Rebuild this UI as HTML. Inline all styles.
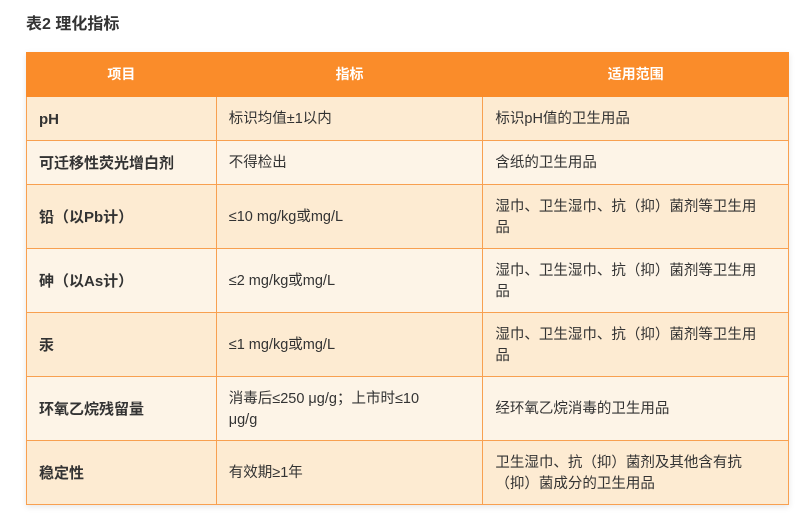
<!DOCTYPE html>
<html><head><meta charset="utf-8"><style>
body{margin:0;background:#fff;font-family:"Liberation Sans","Noto Sans CJK SC",sans-serif;width:800px;height:523px;overflow:hidden;position:relative}
h1{position:absolute;left:26px;top:10px;margin:0;font-size:16px;font-weight:bold;color:#333}
table{position:absolute;left:26px;top:52px;width:763px;border-collapse:collapse;box-shadow:0 2px 6px rgba(0,0,0,.1)}
td,th{border:1px solid #f8a050;font-size:14.5px;color:#333;padding:2px 12px 0;line-height:21px;text-align:left}
th{background:#fa8c2a;color:#fff;height:43px;text-align:center;font-weight:bold;border-color:#fa8c2a;font-size:14px;padding:0}
td:first-child{font-weight:bold;font-size:15px}
tr.a td{background:#fdebd2}
tr.b td{background:#fdf4e7}
</style></head><body>
<h1>表2 理化指标</h1>
<table>
<colgroup><col style="width:190px"><col style="width:267px"><col style="width:306px"></colgroup>
<tr><th>项目</th><th>指标</th><th>适用范围</th></tr>
<tr class="a" style="height:44px"><td>pH</td><td>标识均值±1以内</td><td>标识pH值的卫生用品</td></tr>
<tr class="b" style="height:44px"><td>可迁移性荧光增白剂</td><td>不得检出</td><td>含纸的卫生用品</td></tr>
<tr class="a" style="height:64px"><td>铅（以Pb计）</td><td>≤10 mg/kg或mg/L</td><td>湿巾、卫生湿巾、抗（抑）菌剂等卫生用<br>品</td></tr>
<tr class="b" style="height:64px"><td>砷（以As计）</td><td>≤2 mg/kg或mg/L</td><td>湿巾、卫生湿巾、抗（抑）菌剂等卫生用<br>品</td></tr>
<tr class="a" style="height:64px"><td>汞</td><td>≤1 mg/kg或mg/L</td><td>湿巾、卫生湿巾、抗（抑）菌剂等卫生用<br>品</td></tr>
<tr class="b" style="height:64px"><td>环氧乙烷残留量</td><td>消毒后≤250 μg/g；上市时≤10<br>μg/g</td><td>经环氧乙烷消毒的卫生用品</td></tr>
<tr class="a" style="height:64px"><td>稳定性</td><td>有效期≥1年</td><td>卫生湿巾、抗（抑）菌剂及其他含有抗<br>（抑）菌成分的卫生用品</td></tr>
</table>
</body></html>
